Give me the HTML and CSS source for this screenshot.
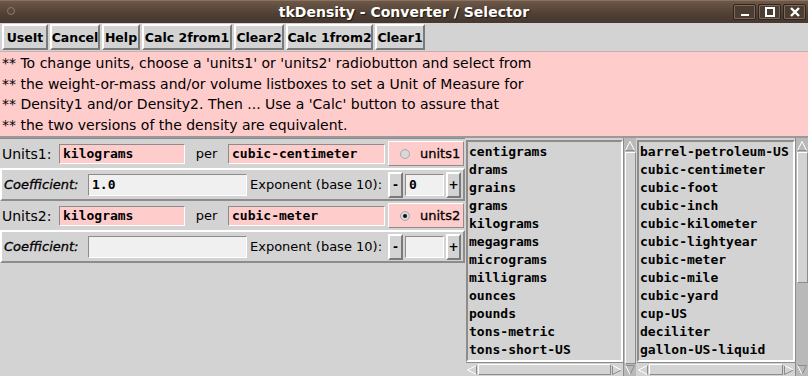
FILE: index.html
```html
<!DOCTYPE html>
<html lang="en">
<head>
  <meta charset="UTF-8">
  <title>tkDensity - Converter / Selector</title>
  <link rel="stylesheet" href="styles.css">
</head>
<body>
  <div class="window">
    <!-- window manager title bar -->
    <div class="titlebar">
      <span class="wm-dot"></span>
      <span class="title">tkDensity - Converter / Selector</span>
      <div class="wm-buttons">
        <span class="wm-btn"><svg width="12" height="12" viewBox="0 0 12 12"><rect x="2" y="8" width="8" height="2" fill="#fff"/></svg></span>
        <span class="wm-btn"><svg width="12" height="12" viewBox="0 0 12 12"><rect x="2" y="2" width="8" height="8" fill="none" stroke="#fff" stroke-width="2"/></svg></span>
        <span class="wm-btn"><svg width="12" height="12" viewBox="0 0 12 12"><path d="M2 2 L10 10 M10 2 L2 10" stroke="#fff" stroke-width="2.4"/></svg></span>
      </div>
    </div>

    <div class="toolbar">
      <button class="tk-btn w-useit">UseIt</button>
      <button class="tk-btn w-cancel">Cancel</button>
      <button class="tk-btn w-help">Help</button>
      <button class="tk-btn w-calc">Calc 2from1</button>
      <button class="tk-btn w-clear">Clear2</button>
      <button class="tk-btn w-calc2">Calc 1from2</button>
      <button class="tk-btn w-clear">Clear1</button>
    </div>

    <div class="info">
      <p>** To change units, choose a 'units1' or 'units2' radiobutton and select from</p>
      <p>** the weight-or-mass and/or volume listboxes to set a Unit of Measure for</p>
      <p>** Density1 and/or Density2. Then ... Use a 'Calc' button to assure that</p>
      <p>** the two versions of the density are equivalent.</p>
    </div>

    <div class="main">
      <div class="form">
        <div class="row units-row">
          <span class="label">Units1:</span>
          <span class="entry pink mass">kilograms</span>
          <span class="per">per</span>
          <span class="entry pink vol">cubic-centimeter</span>
          <span class="radio-box"><span class="radio"></span>units1</span>
        </div>
        <div class="row coef-row">
          <span class="label coef">Coefficient:</span>
          <span class="entry light coef-entry">1.0</span>
          <span class="label exp">Exponent (base 10):</span>
          <span class="tk-btn small">-</span>
          <span class="entry light exp-entry">0</span>
          <span class="tk-btn small plus">+</span>
        </div>
        <div class="row units-row">
          <span class="label">Units2:</span>
          <span class="entry pink mass">kilograms</span>
          <span class="per">per</span>
          <span class="entry pink vol">cubic-meter</span>
          <span class="radio-box"><span class="radio on"></span>units2</span>
        </div>
        <div class="row coef-row">
          <span class="label coef">Coefficient:</span>
          <span class="entry light coef-entry"></span>
          <span class="label exp">Exponent (base 10):</span>
          <span class="tk-btn small">-</span>
          <span class="entry light exp-entry"></span>
          <span class="tk-btn small plus">+</span>
        </div>
      </div>

      <div class="listbox lb-mass">
        <div class="lb-list">
          <ul class="items">
            <li>centigrams</li>
            <li>drams</li>
            <li>grains</li>
            <li>grams</li>
            <li>kilograms</li>
            <li>megagrams</li>
            <li>micrograms</li>
            <li>milligrams</li>
            <li>ounces</li>
            <li>pounds</li>
            <li>tons-metric</li>
            <li>tons-short-US</li>
          </ul>
          <div class="hscroll">
            <svg class="arrow" width="12" height="12" viewBox="0 0 12 12"><path d="M10.5 1.5 L1.5 6 L10.5 10.5" fill="none" stroke="#fff"/><path d="M10.5 1.5 V10.5" stroke="#8c8c8c"/></svg>
            <span class="h-thumb"></span>
            <svg class="arrow" width="12" height="12" viewBox="0 0 12 12"><path d="M1.5 1.5 V10.5 L10.5 6" fill="none" stroke="#8c8c8c"/><path d="M1.5 1.5 L10.5 6" stroke="#fff"/></svg>
          </div>
        </div>
        <div class="vscroll">
          <svg class="arrow" width="12" height="12" viewBox="0 0 12 12"><path d="M1.5 10.5 L6 1.5 L10.5 10.5" fill="none" stroke="#fff"/><path d="M1.5 10.5 H10.5" stroke="#8c8c8c"/></svg>
          <span class="v-thumb full"></span>
          <svg class="arrow" width="12" height="12" viewBox="0 0 12 12"><path d="M1.5 1.5 H10.5 L6 10.5" fill="none" stroke="#8c8c8c"/><path d="M1.5 1.5 L6 10.5" stroke="#fff"/></svg>
        </div>
      </div>

      <div class="listbox lb-vol">
        <div class="lb-list">
          <ul class="items">
            <li>barrel-petroleum-US</li>
            <li>cubic-centimeter</li>
            <li>cubic-foot</li>
            <li>cubic-inch</li>
            <li>cubic-kilometer</li>
            <li>cubic-lightyear</li>
            <li>cubic-meter</li>
            <li>cubic-mile</li>
            <li>cubic-yard</li>
            <li>cup-US</li>
            <li>deciliter</li>
            <li>gallon-US-liquid</li>
          </ul>
          <div class="hscroll">
            <svg class="arrow" width="12" height="12" viewBox="0 0 12 12"><path d="M10.5 1.5 L1.5 6 L10.5 10.5" fill="none" stroke="#fff"/><path d="M10.5 1.5 V10.5" stroke="#8c8c8c"/></svg>
            <span class="h-thumb"></span>
            <svg class="arrow" width="12" height="12" viewBox="0 0 12 12"><path d="M1.5 1.5 V10.5 L10.5 6" fill="none" stroke="#8c8c8c"/><path d="M1.5 1.5 L10.5 6" stroke="#fff"/></svg>
          </div>
        </div>
        <div class="vscroll">
          <svg class="arrow" width="12" height="12" viewBox="0 0 12 12"><path d="M1.5 10.5 L6 1.5 L10.5 10.5" fill="none" stroke="#fff"/><path d="M1.5 10.5 H10.5" stroke="#8c8c8c"/></svg>
          <span class="v-thumb part"></span>
          <span class="v-trough"></span>
          <svg class="arrow" width="12" height="12" viewBox="0 0 12 12"><path d="M1.5 1.5 H10.5 L6 10.5" fill="none" stroke="#8c8c8c"/><path d="M1.5 1.5 L6 10.5" stroke="#fff"/></svg>
        </div>
      </div>
    </div>
  </div>
</body>
</html>
```

FILE: styles.css
```css
:root {
  --bg: #d3d3d3;
  --pink: #ffcccc;
  --light: #f0f0f0;
  --hi: #ffffff;
  --lo: #8c8c8c;
  --text: #000000;
}

* {
  box-sizing: border-box;
  margin: 0;
  padding: 0;
}

body {
  width: 808px;
  height: 376px;
  overflow: hidden;
  background: var(--bg);
  font-family: "DejaVu Sans", sans-serif;
  color: var(--text);
}

.window {
  display: flex;
  flex-direction: column;
  height: 376px;
}

/* Title bar */
.titlebar {
  position: relative;
  height: 23px;
  display: flex;
  align-items: center;
  justify-content: center;
  background: linear-gradient(#6e5848, #4f3f34 60%, #473930);
  border-top: 1px solid #8a7262;
}

.title {
  color: #fff;
  font-weight: bold;
  font-size: 14px;
  text-shadow: 1px 1px 1px #1e1712;
}

.wm-dot {
  position: absolute;
  left: 7px;
  top: 6px;
  width: 8px;
  height: 8px;
  border-radius: 50%;
  border: 1px solid #8d7a6c;
  background: #5a473a;
}

.wm-buttons {
  position: absolute;
  right: 2px;
  top: 3px;
  display: flex;
  gap: 2px;
}

.wm-btn {
  width: 23px;
  height: 16px;
  display: flex;
  align-items: center;
  justify-content: center;
  border: 1px solid #2f251e;
  box-shadow: inset 0 0 0 1px #7f6a5a;
  background: #4c3d33;
  border-radius: 2px;
}

/* Toolbar */
.toolbar {
  display: flex;
  gap: 2px;
  padding: 1px 2px 1px 2px;
  height: 28px;
}

.tk-btn {
  font-family: "DejaVu Sans", sans-serif;
  font-weight: bold;
  font-size: 12.5px;
  background: var(--bg);
  border: 2px solid;
  border-color: var(--hi) #7a7a7a #7a7a7a var(--hi);
  color: var(--text);
  height: 26px;
  padding: 0;
  display: inline-flex;
  align-items: center;
  justify-content: center;
  white-space: nowrap;
}

.w-useit { width: 46px; }
.w-cancel { width: 50px; }
.w-help { width: 38px; }
.w-calc { width: 90px; }
.w-clear { width: 50px; }
.w-calc2 { width: 87px; }

/* Info text */
.info {
  background: var(--pink);
  border-top: 1px solid #c8b0b0;
  border-bottom: 2px solid #9a9a9a;
  padding: 1px 2px 3px 2px;
  height: 87px;
  font-size: 14px;
}

.info p {
  line-height: 20.5px;
  white-space: nowrap;
}

/* Main area */
.main {
  flex: 1;
  display: grid;
  grid-template-columns: 465px 171px 172px;
  min-height: 0;
}

.form {
  display: flex;
  flex-direction: column;
  border-top: 1px solid var(--lo);
}

.row {
  display: flex;
  align-items: center;
  width: 465px;
}

.units-row {
  height: 29px;
  padding-left: 2px;
}

.coef-row {
  height: 33px;
  padding-left: 2px;
  border: 2px solid;
  border-color: var(--hi) var(--lo) var(--lo) var(--hi);
}

.label {
  font-size: 14px;
  white-space: nowrap;
}

.units-row .label { width: 57px; }

.label.coef {
  font-style: italic;
  font-size: 13px;
  width: 84px;
  -webkit-text-stroke: 0.3px #000;
}

.label.exp {
  font-size: 13px;
  width: 141px;
  padding-left: 3px;
}

.entry {
  font-family: "DejaVu Sans Mono", monospace;
  font-weight: bold;
  font-size: 13px;
  display: flex;
  align-items: center;
  padding-left: 3px;
  border: 1px solid;
  border-color: var(--lo) var(--hi) var(--hi) var(--lo);
  white-space: nowrap;
  overflow: hidden;
}

.entry.pink {
  background: var(--pink);
  height: 20px;
}

.entry.light {
  background: var(--light);
  height: 22px;
}

.mass { width: 126px; }
.vol { width: 157px; }

.per {
  width: 43px;
  text-align: center;
  font-size: 13px;
}

.radio-box {
  margin-left: 3px;
  width: 76px;
  height: 25px;
  background: var(--pink);
  border: 1px solid;
  border-color: var(--hi) var(--lo) var(--lo) var(--hi);
  display: flex;
  align-items: center;
  gap: 10px;
  padding-left: 11px;
  font-size: 13px;
  -webkit-text-stroke: 0.3px #000;
}

.radio {
  width: 10px;
  height: 10px;
  border-radius: 50%;
  background: #d8d8d8;
  border: 1px solid #a8a8a8;
  display: inline-flex;
  align-items: center;
  justify-content: center;
}

.radio.on::after {
  content: "";
  width: 4px;
  height: 4px;
  border-radius: 50%;
  background: #111;
}

.coef-entry { width: 159px; }

.tk-btn.small {
  width: 15px;
  height: 26px;
  font-size: 12px;
}

.exp-entry {
  width: 39px;
  margin: 0 2px;
}

/* Listboxes */
.listbox {
  display: grid;
  grid-template-columns: 1fr 13px;
  min-height: 0;
  background: var(--bg);
}

.lb-list {
  display: flex;
  flex-direction: column;
  min-height: 0;
  padding-left: 1px;
}

.items {
  list-style: none;
  flex: 1;
  border: 2px solid;
  border-color: var(--lo) var(--hi) var(--hi) var(--lo);
  padding: 1px 0 0 1px;
  overflow: hidden;
  font-family: "DejaVu Sans Mono", monospace;
  font-weight: bold;
  font-size: 13px;
  margin-top: 2px;
}

.items li {
  line-height: 18px;
  white-space: nowrap;
}

.hscroll {
  height: 14px;
  display: flex;
  align-items: center;
  border-top: 1px solid var(--lo);
}

.h-thumb {
  flex: 1;
  height: 11px;
  border: 1px solid;
  border-color: var(--hi) var(--lo) var(--lo) var(--hi);
}

.arrow {
  flex: none;
  display: block;
}

.vscroll {
  display: flex;
  flex-direction: column;
  align-items: center;
  padding-top: 2px;
  border-left: 1px solid var(--lo);
  background: #b9b9b9;
}

.v-thumb {
  width: 11px;
  border: 1px solid;
  border-color: var(--hi) var(--lo) var(--lo) var(--hi);
  background: var(--bg);
}

.v-thumb.full { flex: 1; }
.v-thumb.part { height: 131px; }
.v-trough { flex: 1; }
```
